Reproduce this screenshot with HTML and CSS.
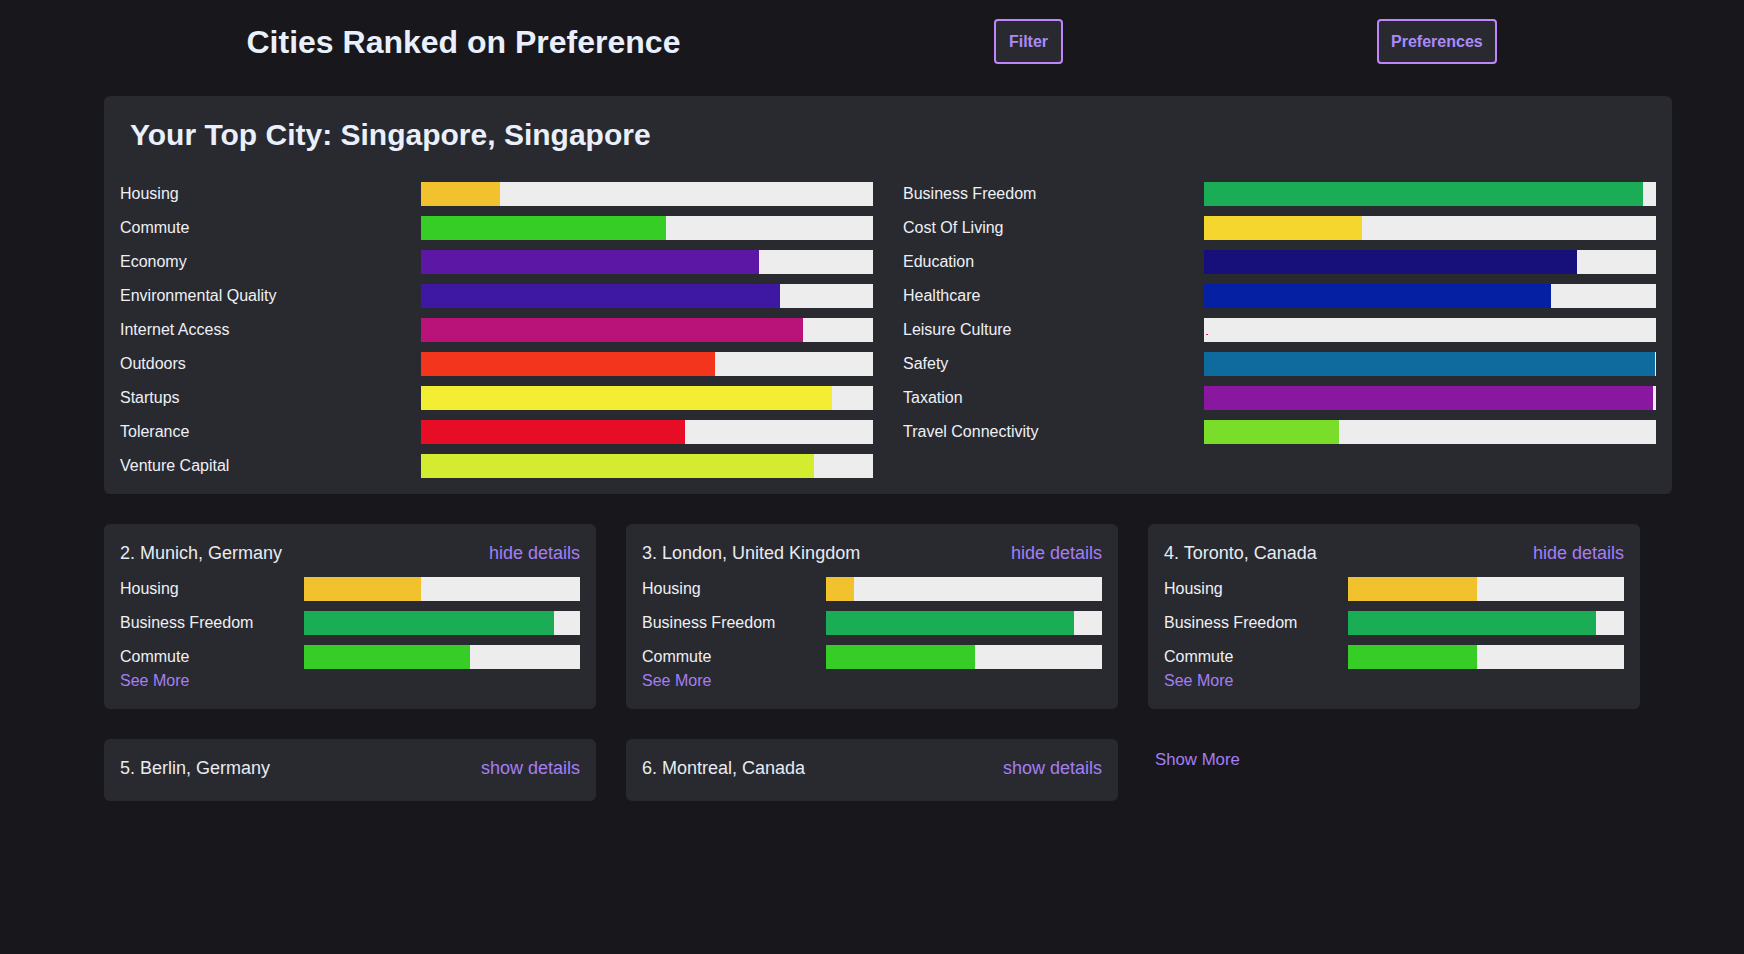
FILE: index.html
```html
<!DOCTYPE html>
<html lang="en">
<head>
<meta charset="utf-8">
<title>Cities Ranked on Preference</title>
<link rel="stylesheet" href="styles.css">
</head>
<body>
<header class="topbar">
  <h1 class="page-title">Cities Ranked on Preference</h1>
  <button class="btn">Filter</button>
  <button class="btn">Preferences</button>
</header>

<section class="top-card">
  <h2 class="top-title">Your Top City: Singapore, Singapore</h2>
  <div class="top-grid">
    <div class="col">
      <div class="row"><span class="label">Housing</span><div class="bar"><div class="fill c-housing" style="width:17.5%"></div></div></div>
      <div class="row"><span class="label">Commute</span><div class="bar"><div class="fill c-commute" style="width:54.2%"></div></div></div>
      <div class="row"><span class="label">Economy</span><div class="bar"><div class="fill c-economy" style="width:74.8%"></div></div></div>
      <div class="row"><span class="label">Environmental Quality</span><div class="bar"><div class="fill c-env" style="width:79.4%"></div></div></div>
      <div class="row"><span class="label">Internet Access</span><div class="bar"><div class="fill c-internet" style="width:84.5%"></div></div></div>
      <div class="row"><span class="label">Outdoors</span><div class="bar"><div class="fill c-outdoors" style="width:65%"></div></div></div>
      <div class="row"><span class="label">Startups</span><div class="bar"><div class="fill c-startups" style="width:90.9%"></div></div></div>
      <div class="row"><span class="label">Tolerance</span><div class="bar"><div class="fill c-tolerance" style="width:58.4%"></div></div></div>
      <div class="row"><span class="label">Venture Capital</span><div class="bar"><div class="fill c-vc" style="width:86.9%"></div></div></div>
    </div>
    <div class="col">
      <div class="row"><span class="label">Business Freedom</span><div class="bar"><div class="fill c-business" style="width:97.1%"></div></div></div>
      <div class="row"><span class="label">Cost Of Living</span><div class="bar"><div class="fill c-cost" style="width:35%"></div></div></div>
      <div class="row"><span class="label">Education</span><div class="bar"><div class="fill c-education" style="width:82.5%"></div></div></div>
      <div class="row"><span class="label">Healthcare</span><div class="bar"><div class="fill c-healthcare" style="width:76.8%"></div></div></div>
      <div class="row"><span class="label">Leisure Culture</span><div class="bar"><div class="dot c-leisure"></div></div></div>
      <div class="row"><span class="label">Safety</span><div class="bar"><div class="fill c-safety" style="width:99.8%"></div></div></div>
      <div class="row"><span class="label">Taxation</span><div class="bar"><div class="fill c-taxation" style="width:99.4%"></div></div></div>
      <div class="row"><span class="label">Travel Connectivity</span><div class="bar"><div class="fill c-travel" style="width:29.9%"></div></div></div>
    </div>
  </div>
</section>

<section class="cards">
  <article class="card">
    <div class="card-head"><span class="card-title">2. Munich, Germany</span><a class="link">hide details</a></div>
    <div class="card-rows">
      <div class="row"><span class="label">Housing</span><div class="bar"><div class="fill c-housing" style="width:42.4%"></div></div></div>
      <div class="row"><span class="label">Business Freedom</span><div class="bar"><div class="fill c-business" style="width:90.6%"></div></div></div>
      <div class="row"><span class="label">Commute</span><div class="bar"><div class="fill c-commute" style="width:60.1%"></div></div></div>
    </div>
    <a class="see-more">See More</a>
  </article>
  <article class="card">
    <div class="card-head"><span class="card-title">3. London, United Kingdom</span><a class="link">hide details</a></div>
    <div class="card-rows">
      <div class="row"><span class="label">Housing</span><div class="bar"><div class="fill c-housing" style="width:10.1%"></div></div></div>
      <div class="row"><span class="label">Business Freedom</span><div class="bar"><div class="fill c-business" style="width:89.9%"></div></div></div>
      <div class="row"><span class="label">Commute</span><div class="bar"><div class="fill c-commute" style="width:54%"></div></div></div>
    </div>
    <a class="see-more">See More</a>
  </article>
  <article class="card">
    <div class="card-head"><span class="card-title">4. Toronto, Canada</span><a class="link">hide details</a></div>
    <div class="card-rows">
      <div class="row"><span class="label">Housing</span><div class="bar"><div class="fill c-housing" style="width:46.7%"></div></div></div>
      <div class="row"><span class="label">Business Freedom</span><div class="bar"><div class="fill c-business" style="width:89.9%"></div></div></div>
      <div class="row"><span class="label">Commute</span><div class="bar"><div class="fill c-commute" style="width:46.7%"></div></div></div>
    </div>
    <a class="see-more">See More</a>
  </article>
  <article class="card">
    <div class="card-head"><span class="card-title">5. Berlin, Germany</span><a class="link">show details</a></div>
  </article>
  <article class="card">
    <div class="card-head"><span class="card-title">6. Montreal, Canada</span><a class="link">show details</a></div>
  </article>
  <a class="show-more">Show More</a>
</section>
</body>
</html>
```
FILE: styles.css
```css
* { box-sizing: border-box; }

body {
  margin: 0;
  background: #17171c;
  color: #eceef3;
  font-family: "Liberation Sans", Arial, Helvetica, sans-serif;
  min-height: 954px;
}

.topbar {
  display: flex;
  align-items: center;
  gap: 314px;
  height: 64px;
  padding: 19px 0 0 246.5px;
  margin-bottom: 32px;
}

.page-title {
  margin: 0;
  padding-top: 2px;
  font-size: 32px;
  font-weight: 700;
  line-height: 43px;
  color: #e9f0fb;
}

.btn {
  height: 45px;
  padding: 0 12.5px;
  border: 2px solid #c084fc;
  border-radius: 4px;
  background: #292a30;
  color: #a98af8;
  font-family: inherit;
  font-size: 16px;
  font-weight: 700;
  cursor: pointer;
}

.top-card {
  width: 1568px;
  margin: 0 0 30px 104px;
  padding: 16px;
  background: #292a30;
  border-radius: 6px;
}

.top-title {
  margin: 5px 10px 29px;
  font-size: 30px;
  line-height: 36px;
  font-weight: 700;
  color: #e9f0fb;
}

.top-grid {
  display: grid;
  grid-template-columns: 1fr 1fr;
  column-gap: 30px;
}

.col,
.card-rows {
  display: flex;
  flex-direction: column;
  gap: 10px;
}

.row {
  display: grid;
  grid-template-columns: 40% 60%;
  align-items: center;
  height: 24px;
}

.label {
  font-size: 16px;
  line-height: 24px;
  color: #eef0f5;
  white-space: nowrap;
}

.bar {
  height: 24px;
  background: #ededed;
  overflow: hidden;
}

.fill {
  height: 100%;
}

.dot {
  width: 2px;
  height: 1px;
  margin: 16px 0 0 2px;
}

.c-housing { background: #f2c12e; }
.c-commute { background: #36cd27; }
.c-economy { background: #5c18a4; }
.c-env { background: #3e17a3; }
.c-internet { background: #b9137a; }
.c-outdoors { background: #f3351d; }
.c-startups { background: #f3ee33; }
.c-tolerance { background: #e70d26; }
.c-vc { background: #d4ec2f; }
.c-business { background: #1aad55; }
.c-cost { background: #f4d62e; }
.c-education { background: #170f7a; }
.c-healthcare { background: #0620a3; }
.c-leisure { background: #ea1468; }
.c-safety { background: #0f6a9e; }
.c-taxation { background: #8a179f; }
.c-travel { background: #7add2a; }

.cards {
  display: grid;
  grid-template-columns: repeat(3, 492px);
  gap: 30px;
  align-items: start;
  margin-left: 104px;
}

.card {
  background: #292a30;
  border-radius: 6px;
  padding: 16px;
}

.card-head {
  display: flex;
  justify-content: space-between;
  align-items: flex-start;
  height: 30px;
  font-size: 18px;
  line-height: 26px;
}

.card-title {
  color: #e8ebf1;
}

.link,
.see-more,
.show-more {
  color: #a57ef3;
  cursor: pointer;
}

.card-rows {
  margin-top: 7px;
}

.see-more {
  display: block;
  font-size: 16px;
  line-height: 24px;
}

.show-more {
  justify-self: start;
  padding: 11px 7px;
  font-size: 16.8px;
}
```
